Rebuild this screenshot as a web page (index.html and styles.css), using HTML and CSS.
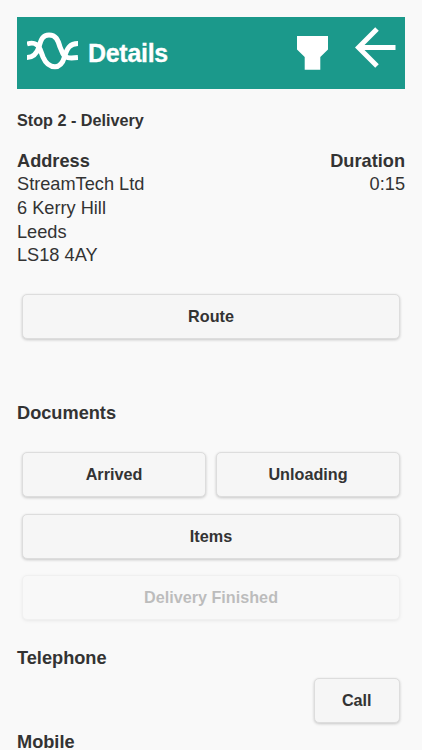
FILE: index.html
```html
<!DOCTYPE html>
<html lang="en">
<head>
  <meta charset="UTF-8">
  <meta name="viewport" content="width=device-width, initial-scale=1.0">
  <title>Details</title>
  <link rel="stylesheet" href="styles.css">
</head>
<body>
  <header class="header">
    <svg class="logo" width="51" height="40" viewBox="0 0 51 40" fill="none" stroke="#fff" stroke-width="5">
      <path d="M0 14C6 12 10 13 13 19L16 27C19 34 23 36.700 28 36.700C34 36.700 36 32 37.500 27C40 18 43 13.500 51 13.500"/>
      <path d="M0 27.500C7 27.500 10 23 12 17C14 9 16 5 22 5C29 5 31 10 33 17L36 24C38 28 42 28.500 51 27.500"/>
    </svg>
    <h1 class="title">Details</h1>
    <svg class="torch" width="31" height="34" viewBox="0 0 31 34" fill="#fff">
      <path d="M0 0H31V13.500L23.300 21V33.700H7.700V21L0 13.500Z"/>
    </svg>
    <svg class="back" width="41" height="42" viewBox="0 0 41 42" fill="none" stroke="#fff" stroke-width="5">
      <path d="M22 2L3.500 20.500L22 39M3.500 20.500H40.500"/>
    </svg>
  </header>

  <h4 class="stop">Stop 2 - Delivery</h4>

  <div class="info">
    <div class="address">
      <b>Address</b><br>
      StreamTech Ltd<br>
      6 Kerry Hill<br>
      Leeds<br>
      LS18 4AY
    </div>
    <div class="duration">
      <b>Duration</b><br>
      0:15
    </div>
  </div>

  <div class="route">
    <button class="btn">Route</button>
  </div>

  <h3 class="documents">Documents</h3>
  <div class="actions">
    <button class="btn">Arrived</button>
    <button class="btn">Unloading</button>
    <button class="btn wide">Items</button>
    <button class="btn wide" disabled>Delivery Finished</button>
  </div>

  <h3 class="telephone">Telephone</h3>
  <div class="call">
    <button class="btn">Call</button>
  </div>
  <h3 class="mobile">Mobile</h3>
</body>
</html>
```
FILE: styles.css
```css
body {
  margin: 0;
  padding: 16.5px 17px 0;
  height: 750px;
  box-sizing: border-box;
  overflow: hidden;
  background-color: #f9f9f9;
  color: #333;
  font-family: "Liberation Sans", Helvetica, Arial, sans-serif;
  font-size: 18.2px;
  line-height: 23.4px;
}
h1, h3, h4 {
  margin: 0;
}
h3 {
  font-size: 18.2px;
}
.header {
  display: flex;
  align-items: flex-start;
  height: 72px;
  padding: 0 9.5px 0 10px;
  background-color: #1b998b;
}
.logo {
  margin-top: 13.5px;
}
.title {
  flex: 1;
  margin: 19px 0 0 10px;
  color: white;
  font-size: 25px;
  letter-spacing: -0.3px;
  line-height: 34px;
  -webkit-text-stroke: 0.3px white;
}
.torch {
  margin-top: 19.5px;
}
.back {
  margin: 10px 0 0 26.5px;
}
.stop {
  margin-top: 21px;
  font-size: 16.2px;
  line-height: 21px;
}
.info {
  display: flex;
  justify-content: space-between;
  margin-top: 19.3px;
  line-height: 23.6px;
}
.duration {
  text-align: right;
}
.btn {
  height: 45px;
  padding: 0;
  box-sizing: border-box;
  border: 1px solid #ddd;
  border-radius: 5px;
  background-color: #f6f6f6;
  box-shadow: 0 1px 3px rgba(0, 0, 0, 0.2);
  color: #333;
  font-family: inherit;
  font-size: 16.2px;
  font-weight: bold;
}
.btn:disabled {
  opacity: 0.3;
}
.route {
  display: grid;
  margin: 26.3px 5px 0;
}
.documents {
  margin-top: 63px;
}
.actions {
  display: grid;
  grid-template-columns: 1fr 1fr;
  gap: 16.5px 10px;
  margin: 26.6px 5px 0;
}
.wide {
  grid-column: span 2;
}
.telephone {
  margin-top: 27px;
}
.call {
  display: flex;
  justify-content: flex-end;
  margin: 7.8px 5px 0;
}
.call .btn {
  width: 86.5px;
}
.mobile {
  margin-top: 8px;
}
```
